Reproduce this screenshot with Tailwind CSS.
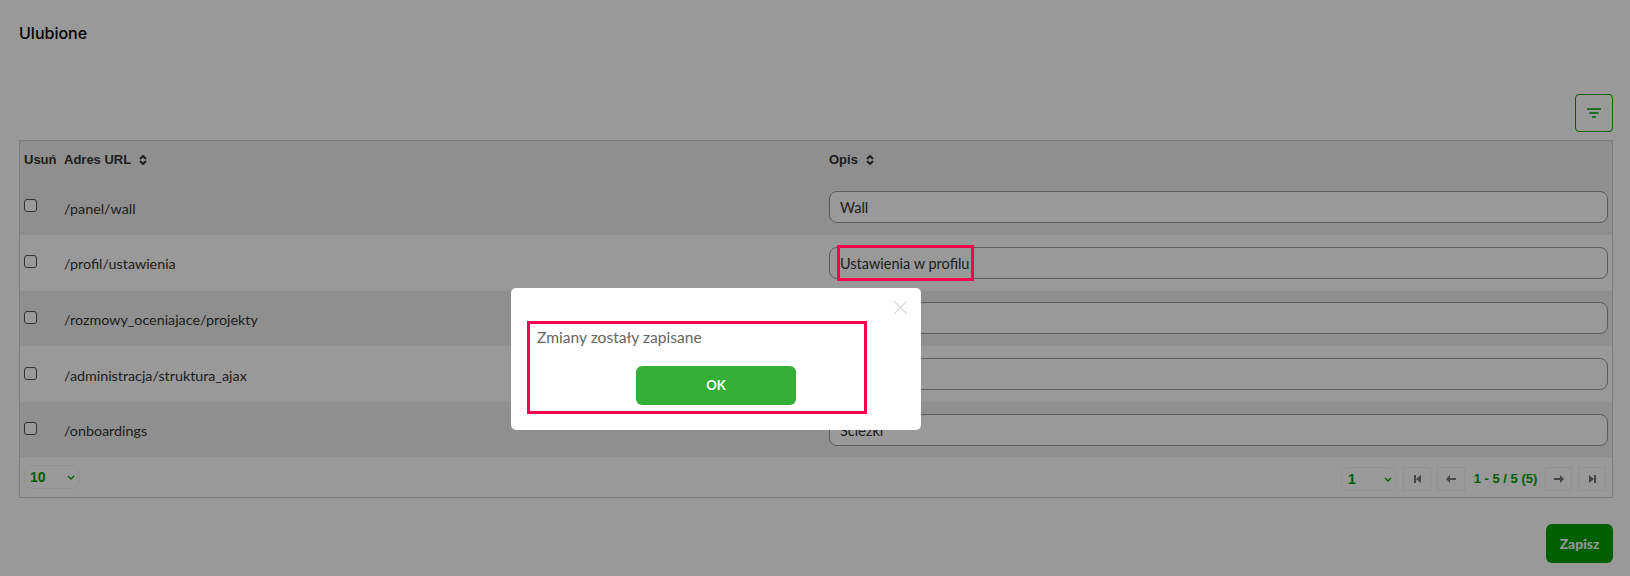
<!DOCTYPE html>
<html lang="pl">

<head>
    <meta charset="UTF-8">
    <meta name="viewport" content="width=device-width, initial-scale=1.0">
    <title>Ulubione</title>
    <script src="https://cdn.jsdelivr.net/npm/@tailwindcss/browser@4"></script>
</head>

<body class="relative h-[576px] overflow-hidden bg-white font-['Lato',sans-serif] text-[#333]">

    <!-- page -->
    <main class="flex h-full flex-col px-[19px] pr-[17px]">
        <h1 class="mt-[23px] h-5 font-['Inter',sans-serif] text-base leading-5 font-medium text-black">Ulubione</h1>

        <div class="mt-[51px] flex justify-end">
            <button class="flex h-[38px] w-[38px] items-center justify-center rounded-[4px] border border-[#00a000]">
                <svg width="14" height="10" viewBox="0 0 14 10" fill="none" stroke="#00a000" stroke-width="1.4">
                    <path d="M0 1h14M2.5 5h9M5 9h4" />
                </svg>
            </button>
        </div>

        <section class="mt-2 h-[358px] border border-[#d2d3d8]">
            <!-- header -->
            <div class="grid h-[38px] grid-cols-[40px_765px_1fr] items-center bg-[#eee] font-['Liberation_Sans',sans-serif] text-[13px] font-bold text-[#333]">
                <span class="pl-1">Usuń</span>
                <span class="flex items-center gap-2 pl-1">Adres URL
                    <svg width="8" height="10" viewBox="0 0 8 10" fill="none" stroke="#333" stroke-width="2">
                        <path d="M1 4l3-3 3 3M1 6l3 3 3-3" />
                    </svg>
                </span>
                <span class="flex items-center gap-2 pl-1">Opis
                    <svg width="8" height="10" viewBox="0 0 8 10" fill="none" stroke="#333" stroke-width="2">
                        <path d="M1 4l3-3 3 3M1 6l3 3 3-3" />
                    </svg>
                </span>
            </div>

            <!-- rows -->
            <div class="grid h-[55.75px] grid-cols-[40px_765px_1fr] items-center bg-[#eee] text-[14.3px]">
                <input type="checkbox" class="mb-[2px] ml-1 h-[13px] w-[13px] appearance-none rounded-[3px] border border-[#555] bg-white">
                <span class="pt-[3px] pl-1">/panel/wall</span>
                <div class="pr-[4px] pl-1"><input value="Wall" class="h-8 w-full rounded-lg border border-[#999] bg-white px-[10px] pt-[2px] text-[14.5px] outline-none"></div>
            </div>
            <div class="grid h-[55.75px] grid-cols-[40px_765px_1fr] items-center bg-white text-[14.3px]">
                <input type="checkbox" class="mb-[2px] ml-1 h-[13px] w-[13px] appearance-none rounded-[3px] border border-[#555] bg-white">
                <span class="pt-[3px] pl-1">/profil/ustawienia</span>
                <div class="pr-[4px] pl-1"><input value="Ustawienia w profilu" class="h-8 w-full rounded-lg border border-[#999] bg-white px-[10px] pt-[2px] text-[14.5px] outline-none"></div>
            </div>
            <div class="grid h-[55.75px] grid-cols-[40px_765px_1fr] items-center bg-[#eee] text-[14.3px]">
                <input type="checkbox" class="mb-[2px] ml-1 h-[13px] w-[13px] appearance-none rounded-[3px] border border-[#555] bg-white">
                <span class="pt-[3px] pl-1">/rozmowy_oceniajace/projekty</span>
                <div class="pr-[4px] pl-1"><input value="Projekty" class="h-8 w-full rounded-lg border border-[#999] bg-white px-[10px] pt-[2px] text-[14.5px] outline-none"></div>
            </div>
            <div class="grid h-[55.75px] grid-cols-[40px_765px_1fr] items-center bg-white text-[14.3px]">
                <input type="checkbox" class="mb-[2px] ml-1 h-[13px] w-[13px] appearance-none rounded-[3px] border border-[#555] bg-white">
                <span class="pt-[3px] pl-1">/administracja/struktura_ajax</span>
                <div class="pr-[4px] pl-1"><input value="Struktura" class="h-8 w-full rounded-lg border border-[#999] bg-white px-[10px] pt-[2px] text-[14.5px] outline-none"></div>
            </div>
            <div class="grid h-[55px] grid-cols-[40px_765px_1fr] items-center bg-[#eee] text-[14.3px]">
                <input type="checkbox" class="mb-[2px] ml-1 h-[13px] w-[13px] appearance-none rounded-[3px] border border-[#555] bg-white">
                <span class="pt-[3px] pl-1">/onboardings</span>
                <div class="pr-[4px] pl-1"><input value="Ścieżki" class="h-8 w-full rounded-lg border border-[#999] bg-white px-[10px] pt-[2px] text-[14.5px] outline-none"></div>
            </div>

            <!-- footer -->
            <div class="flex h-10 items-start justify-between pr-[6px] pl-1 font-['Liberation_Sans',sans-serif] text-sm font-bold text-[#00a000]">
                <div class="mt-[8px] flex h-[24px] w-[56px] items-center justify-between rounded-lg border border-[#f2f2f2] pr-[4px] pl-[5px]">
                    10
                    <svg width="8" height="5" viewBox="0 0 8 5" fill="none" stroke="#00a000" stroke-width="1.3"><path d="M1 1l3 3 3-3" /></svg>
                </div>
                <div class="mt-[10px] flex items-center">
                    <div class="flex h-[24px] w-[56px] items-center justify-between rounded-lg border border-[#f2f2f2] pr-[4px] pl-[6px]">
                        1
                        <svg width="8" height="5" viewBox="0 0 8 5" fill="none" stroke="#00a000" stroke-width="1.3"><path d="M1 1l3 3 3-3" /></svg>
                    </div>
                    <button class="ml-[6px] flex h-[24px] w-[28px] items-center justify-center border border-[#f2f2f2]">
                        <svg width="7" height="8" viewBox="0 0 7 8" fill="#777"><path d="M0 0h2v8H0zM7 0v8L2 4z" /></svg>
                    </button>
                    <button class="ml-[6px] flex h-[24px] w-[28px] items-center justify-center border border-[#f2f2f2]">
                        <svg width="10" height="8" viewBox="0 0 10 8" fill="#777"><path d="M0 4l4-4v3h6v2H4v3z" /></svg>
                    </button>
                    <span class="w-[80px] pl-[1px] text-center text-[13px] whitespace-nowrap">1 - 5 / 5 (5)</span>
                    <button class="flex h-[24px] w-[27px] items-center justify-center border border-[#f2f2f2]">
                        <svg width="10" height="8" viewBox="0 0 10 8" fill="#777"><path d="M10 4L6 0v3H0v2h6v3z" /></svg>
                    </button>
                    <button class="ml-[6px] flex h-[24px] w-[28px] items-center justify-center border border-[#f2f2f2]">
                        <svg width="7" height="8" viewBox="0 0 7 8" fill="#777"><path d="M7 0H5v8h2zM0 0v8l5-4z" /></svg>
                    </button>
                </div>
            </div>
        </section>

        <div class="mt-[26px] flex justify-end">
            <button class="h-[39px] w-[67px] rounded-md bg-[#00a000] text-sm font-bold text-white">Zapisz</button>
        </div>
    </main>

    <!-- overlay -->
    <div class="fixed inset-0 bg-black/40"></div>

    <!-- alert -->
    <div class="absolute top-[288px] left-[511px] flex h-[142px] w-[410px] flex-col items-start rounded-[5px] bg-white">
        <svg class="absolute top-[13px] right-[14px]" width="13" height="13" viewBox="0 0 13 13" fill="none" stroke="#d9d9d9" stroke-width="1.3">
            <path d="M0.5 0.5l12 12M12.5 0.5l-12 12" />
        </svg>
        <p class="mt-[39px] ml-[26px] text-[15.6px] leading-5 text-[#666]">Zmiany zostały zapisane</p>
        <button class="mt-[19px] ml-[125px] h-[39px] w-[160px] rounded-md bg-[#34ae35] pt-[1px] text-[13px] font-bold text-white">OK</button>
    </div>

    <!-- red annotation frames -->
    <div class="absolute top-[245px] left-[837px] h-[36px] w-[137px] border-[3px] border-[#f5034f]"></div>
    <div class="absolute top-[321px] left-[527px] h-[93px] w-[340px] border-[3px] border-[#f5034f]"></div>

</body>

</html>
